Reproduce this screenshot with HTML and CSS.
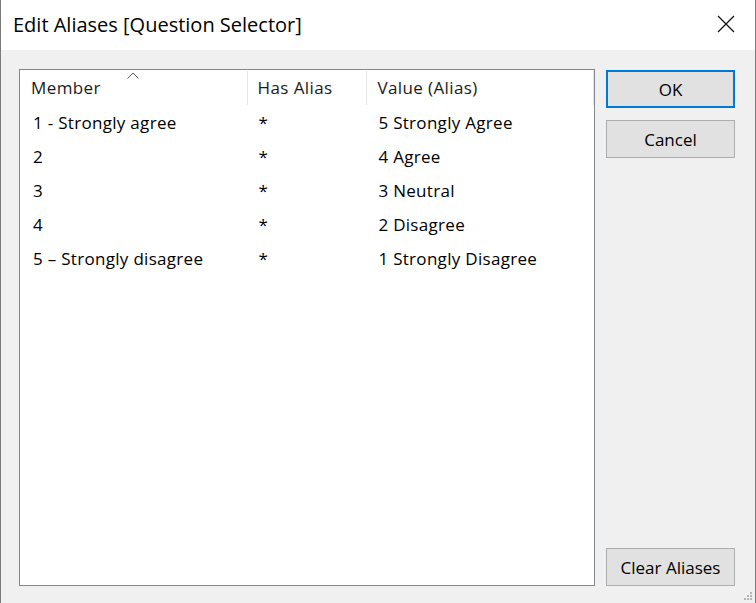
FILE: index.html
```html
<!DOCTYPE html>
<html>
<head>
<meta charset="utf-8">
<link rel="stylesheet" href="styles.css">
</head>
<body>
<div class="window">
  <div class="titlebar">
    <span class="title">Edit Aliases [Question Selector]</span>
    <svg class="close" width="18" height="18" viewBox="0 0 18 18"><path d="M1 1L17 17M17 1L1 17" stroke="#111" stroke-width="1.2" fill="none"/></svg>
  </div>
  <div class="content">
    <div class="listbox">
      <div class="header">
        <div class="hcell c1">Member<svg class="sort" width="12" height="7" viewBox="0 0 12 7"><path d="M0.5 6.5L6 1L11.5 6.5" stroke="#555" stroke-width="1" fill="none"/></svg></div>
        <div class="hcell c2">Has Alias</div>
        <div class="hcell c3">Value (Alias)</div>
      </div>
      <div class="row"><div class="cell c1">1 - Strongly agree</div><div class="cell c2">*</div><div class="cell c3">5 Strongly Agree</div></div>
      <div class="row"><div class="cell c1">2</div><div class="cell c2">*</div><div class="cell c3">4 Agree</div></div>
      <div class="row"><div class="cell c1">3</div><div class="cell c2">*</div><div class="cell c3">3 Neutral</div></div>
      <div class="row"><div class="cell c1">4</div><div class="cell c2">*</div><div class="cell c3">2 Disagree</div></div>
      <div class="row"><div class="cell c1">5 – Strongly disagree</div><div class="cell c2">*</div><div class="cell c3">1 Strongly Disagree</div></div>
    </div>
    <div class="buttons">
      <button class="btn default">OK</button>
      <button class="btn">Cancel</button>
      <div class="spacer"></div>
      <button class="btn">Clear Aliases</button>
    </div>
    <div class="grip">
      <span class="d d1"></span><span class="d d2"></span><span class="d d3"></span><span class="d d4"></span><span class="d d5"></span><span class="d d6"></span>
    </div>
  </div>
</div>
</body>
</html>
```
FILE: styles.css
```css
* { box-sizing: border-box; }
html, body { margin: 0; padding: 0; }
body {
  width: 756px;
  height: 603px;
  overflow: hidden;
  font-family: "Open Sans", "Noto Sans", "Liberation Sans", sans-serif;
  color: #000;
}
.window {
  width: 756px;
  height: 603px;
  border-left: 1px solid #7a7a7a;
  border-right: 1px solid #7a7a7a;
  display: flex;
  flex-direction: column;
  background: #f0f0f0;
}
.titlebar {
  height: 50px;
  background: #fff;
  display: flex;
  align-items: center;
  padding-left: 12px;
  padding-right: 20px;
  flex-shrink: 0;
}
.title {
  font-size: 20px;
  color: #000;
  flex: 1;
  margin-top: -2px;
}
.close { margin-top: -2px; }
.content {
  flex: 1;
  display: flex;
  padding: 19px 20px 17px 18px;
  gap: 11px;
  position: relative;
}
.listbox {
  width: 576px;
  background: #fff;
  border: 1px solid #828790;
}
.header {
  display: flex;
  height: 35px;
  align-items: stretch;
}
.hcell {
  font-size: 17px;
  letter-spacing: 0.4px;
  color: #1a1a1a;
  display: flex;
  align-items: center;
  position: relative;
  padding-bottom: 1px;
  margin-top: 1px;
}
.hcell.c1 { padding-left: 11px; }
.hcell.c2 { padding-left: 10px; border-left: 1px solid #e5e5e5; }
.hcell.c3 { padding-left: 10px; border-left: 1px solid #e5e5e5; border-right: 1px solid #e5e5e5; }
.c1 { width: 227px; }
.c2 { width: 120px; }
.c3 { width: 228px; }
.sort {
  position: absolute;
  left: 107px;
  top: 1px;
}
.row {
  display: flex;
  height: 34px;
  align-items: center;
}
.cell {
  font-size: 17px;
  letter-spacing: 0.3px;
  color: #000;
  padding-top: 1px;
}
.cell.c1 { padding-left: 13px; }
.cell.c2 { padding-left: 12px; }
.cell.c3 { padding-left: 12px; }
.buttons {
  width: 129px;
  display: flex;
  flex-direction: column;
  gap: 12px;
  padding-top: 1px;
}
.spacer { flex: 1; }
.btn {
  height: 38px;
  width: 129px;
  background: #e1e1e1;
  border: 1px solid #adadad;
  font-family: inherit;
  font-size: 17px;
  color: #000;
  padding: 0;
}
.btn.default {
  border: 2px solid #0078d7;
}
.grip {
  position: absolute;
  right: 3px;
  bottom: 3px;
  width: 10px;
  height: 10px;
}
.d {
  position: absolute;
  width: 2px;
  height: 2px;
  background: #b5b5b5;
}
.d1 { right: 0; bottom: 0; }
.d2 { right: 3px; bottom: 0; }
.d3 { right: 6px; bottom: 0; }
.d4 { right: 0; bottom: 3px; }
.d5 { right: 3px; bottom: 3px; }
.d6 { right: 0; bottom: 6px; }
```
